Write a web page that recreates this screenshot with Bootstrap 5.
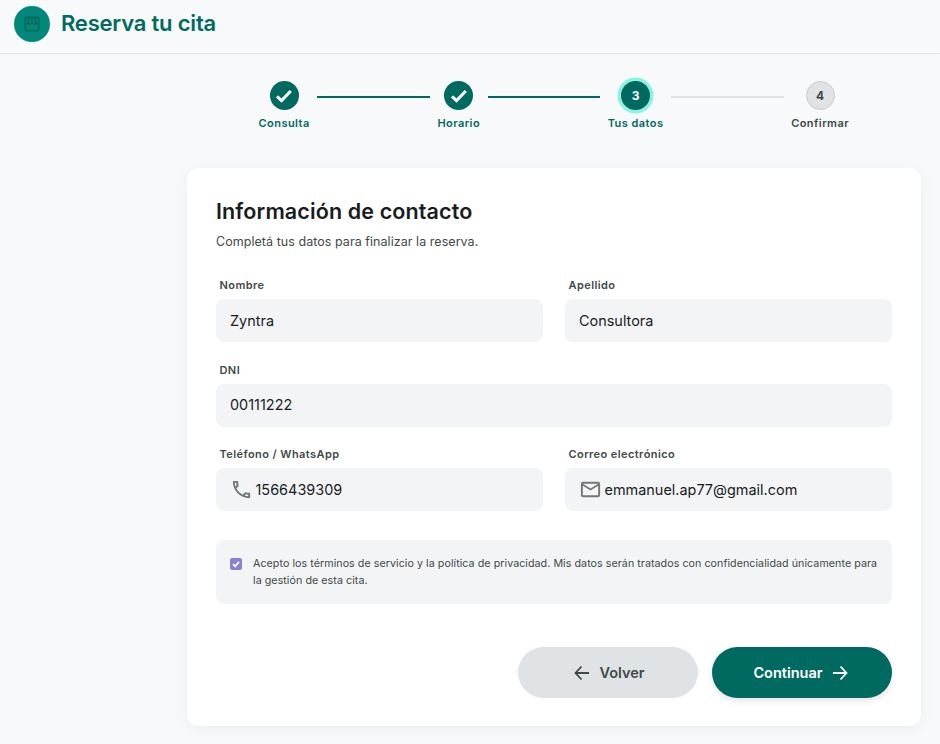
<!DOCTYPE html>
<html lang="es">
<head>
<meta charset="utf-8">
<title>Reserva tu cita</title>
<link href="https://cdn.jsdelivr.net/npm/bootstrap@5.3.0/dist/css/bootstrap.min.css" rel="stylesheet">
<style>
html,body{height:744px;overflow:hidden}
body{background:#f7f9fb;font-family:Inter,"Liberation Sans",sans-serif;color:#191c1e}
.topbar{height:54px;padding:6px 14px 0;gap:11px;background:#f7f9fb;border-bottom:1px solid #e4e6e8;box-shadow:0 1px 2px rgba(0,0,0,.03)}
.brand-dot{width:36px;height:36px;border-radius:50%;background:#00897b;color:#00695f}
.brand-name{font-family:Inter,sans-serif;font-size:22px;font-weight:600;color:#006a60;letter-spacing:-.2px;margin:0;line-height:35px}
.stepper{margin:27px 0 0 258.500px;width:590.500px;gap:7.500px}
.step-item{flex:none;display:flex;flex-direction:column;align-items:center}
.step-circle{width:29px;height:29px;border-radius:50%;background:#006a60;color:#fff;font-size:12px;font-weight:700}
.step-circle.now{box-shadow:0 0 0 3.5px #8ff1e0}
.step-circle.todo{background:#e0e3e5;color:#3f4947;border:1px solid #c8ccce}
.step-text{margin-top:6px;font-size:11px;font-weight:600;letter-spacing:.45px;color:#006a60;line-height:15px;white-space:nowrap}
.step-text.todo{color:#3f4947}
.step-line{flex:1;height:2px;margin-top:15px;background:#006a60}
.step-line.todo{background:#e0e3e5}
.form-card{margin:37px 19px 0 187px;height:558px;background:#fff;border:0;border-radius:12px;padding:29px 29px 0;box-shadow:0 3px 16px rgba(25,28,30,.05)}
.form-title{font-family:Inter,sans-serif;font-size:21.5px;font-weight:600;color:#191c1e;line-height:29px;margin:0 0 7px;letter-spacing:.12px}
.form-sub{font-size:12.5px;color:#3f4947;line-height:18px;margin:0 0 27px;letter-spacing:.05px}
.field-grid{--bs-gutter-x:22px;--bs-gutter-y:20.5px}
.field-label{display:block;font-size:11px;font-weight:600;letter-spacing:.42px;color:#3f4947;line-height:14px;margin:0 0 7px 3.5px}
.field-box{height:43px;background:#f2f4f6;border-radius:8px;padding:0 14px;gap:2.5px;font-size:14.45px;color:#191c1e}
.field-box svg{flex:none;color:#6f7977}
.consent{flex:none;margin-top:29px;height:64px;background:#f2f4f6;border-radius:8px;padding:15px 14px 0;gap:11px;font-size:10.7px;line-height:17px;color:#3f4947;letter-spacing:.05px}
.tick{flex:none;width:12px;height:12px;margin-top:3px;border-radius:2px;background:#8c7fd1}
.action-row{flex:none;margin-top:43px;gap:14px}
.pill-btn{width:180px;height:51px;border:0;border-radius:26px;font-size:14.5px;font-weight:600;gap:8px}
.pill-back{background:#e0e3e5;color:#3f4947;padding-left:14px}
.pill-next{background:#006a60;color:#fff;box-shadow:0 3px 6px rgba(0,0,0,.1);padding-right:14px}
</style>
</head>
<body>
<header class="topbar d-flex align-items-start">
  <span class="brand-dot d-flex align-items-center justify-content-center">
    <svg width="20" height="20" viewBox="0 0 24 24" fill="currentColor"><path d="M21.900 8.890l-1.050-4.370c-.22-.9-1-1.520-1.910-1.520H5.050c-.9 0-1.690.63-1.900 1.520L2.100 8.890c-.24 1.020-.02 2.060.62 2.880.08.11.19.19.28.29V19c0 1.100.9 2 2 2h14c1.100 0 2-.9 2-2v-6.940c.09-.09.2-.18.28-.28.64-.82.87-1.870.62-2.890zm-2.990-3.900 1.050 4.370c.1.420.01.840-.25 1.170-.14.180-.44.470-.94.470-.61 0-1.140-.49-1.210-1.140L16.980 5l1.930-.01zM13 5h1.960l.54 4.520c.05.390-.07.780-.33 1.070-.22.260-.54.410-.95.410-.67 0-1.220-.59-1.220-1.310V5zM8.490 9.520 9.040 5H11v4.690c0 .72-.55 1.310-1.290 1.310-.34 0-.65-.15-.89-.41-.25-.29-.37-.68-.33-1.070zm-4.450-.16L5.050 5h1.970l-.58 4.860c-.08.650-.6 1.140-1.210 1.140-.49 0-.8-.29-.93-.47-.27-.32-.36-.75-.26-1.170zM5 19v-6.030c.08.010.15.030.23.030.87 0 1.660-.36 2.240-.95.6.6 1.400.95 2.310.95.87 0 1.650-.36 2.230-.93.59.57 1.390.93 2.290.93.84 0 1.640-.35 2.240-.95.58.59 1.370.95 2.240.95.08 0 .15-.02.23-.03V19H5z"/></svg>
  </span>
  <h1 class="brand-name">Reserva tu cita</h1>
</header>

<nav class="stepper d-flex align-items-start">
  <div class="step-item"><span class="step-circle d-flex align-items-center justify-content-center"><svg width="18" height="18" viewBox="0 0 18 18" fill="none" stroke="#fff" stroke-width="3"><path d="M2 9.300 6.500 13.600 15.800 4"/></svg></span><span class="step-text">Consulta</span></div>
  <div class="step-line"></div>
  <div class="step-item"><span class="step-circle d-flex align-items-center justify-content-center"><svg width="18" height="18" viewBox="0 0 18 18" fill="none" stroke="#fff" stroke-width="3"><path d="M2 9.300 6.500 13.600 15.800 4"/></svg></span><span class="step-text">Horario</span></div>
  <div class="step-line"></div>
  <div class="step-item"><span class="step-circle now d-flex align-items-center justify-content-center">3</span><span class="step-text">Tus datos</span></div>
  <div class="step-line todo"></div>
  <div class="step-item"><span class="step-circle todo d-flex align-items-center justify-content-center">4</span><span class="step-text todo">Confirmar</span></div>
</nav>

<main class="card form-card">
  <h2 class="form-title">Información de contacto</h2>
  <p class="form-sub">Completá tus datos para finalizar la reserva.</p>
  <div class="row field-grid">
    <div class="col-6"><label class="field-label">Nombre</label><div class="field-box d-flex align-items-center">Zyntra</div></div>
    <div class="col-6"><label class="field-label">Apellido</label><div class="field-box d-flex align-items-center">Consultora</div></div>
    <div class="col-12"><label class="field-label">DNI</label><div class="field-box d-flex align-items-center">00111222</div></div>
    <div class="col-6"><label class="field-label">Teléfono / WhatsApp</label><div class="field-box d-flex align-items-center">
      <svg width="23" height="23" viewBox="0 0 24 24" fill="currentColor"><path d="M6.540 5c.06.89.21 1.760.45 2.590l-1.200 1.200c-.41-1.200-.67-2.470-.76-3.790h1.510m9.860 12.020c.85.24 1.720.39 2.600.45v1.490c-1.320-.09-2.590-.35-3.800-.75l1.200-1.190M7.500 3H4c-.55 0-1 .45-1 1 0 9.390 7.610 17 17 17 .55 0 1-.45 1-1v-3.490c0-.55-.45-1-1-1-1.240 0-2.450-.2-3.570-.57-.1-.04-.21-.05-.31-.05-.26 0-.51.1-.71.29l-2.200 2.200c-2.830-1.450-5.150-3.760-6.590-6.590l2.200-2.200c.28-.28.36-.67.25-1.020C8.700 6.450 8.500 5.250 8.500 4c0-.55-.45-1-1-1z"/></svg>
      <span>1566439309</span></div></div>
    <div class="col-6"><label class="field-label">Correo electrónico</label><div class="field-box d-flex align-items-center">
      <svg width="23" height="23" viewBox="0 0 24 24" fill="currentColor"><path d="M20 4H4c-1.100 0-1.990.9-1.990 2L2 18c0 1.100.9 2 2 2h16c1.100 0 2-.9 2-2V6c0-1.100-.9-2-2-2zm0 14H4V8l8 5 8-5v10zm-8-7L4 6h16l-8 5z"/></svg>
      <span>emmanuel.ap77@gmail.com</span></div></div>
  </div>
  <div class="consent d-flex align-items-start">
    <span class="tick d-flex align-items-center justify-content-center"><svg width="10" height="10" viewBox="0 0 10 10" fill="none" stroke="#fff" stroke-width="1.800"><path d="M2 5.200 4.200 7.400 8 2.800"/></svg></span>
    <span>Acepto los términos de servicio y la política de privacidad. Mis datos serán tratados con confidencialidad únicamente para la gestión de esta cita.</span>
  </div>
  <div class="action-row d-flex justify-content-end">
    <button type="button" class="btn pill-btn pill-back d-flex align-items-center justify-content-center"><svg width="18" height="18" viewBox="0 0 18 18" fill="none" stroke="currentColor" stroke-width="1.800"><path d="M16 9H2.500M8.500 2.500 2.500 9l6 6.500"/></svg>Volver</button>
    <button type="button" class="btn pill-btn pill-next d-flex align-items-center justify-content-center">Continuar<svg width="18" height="18" viewBox="0 0 18 18" fill="none" stroke="currentColor" stroke-width="1.800"><path d="M2 9h13.500M9.500 2.500l6 6.500-6 6.500"/></svg></button>
  </div>
</main>
<script src="https://cdn.jsdelivr.net/npm/bootstrap@5.3.0/dist/js/bootstrap.bundle.min.js"></script>
</body>
</html>
